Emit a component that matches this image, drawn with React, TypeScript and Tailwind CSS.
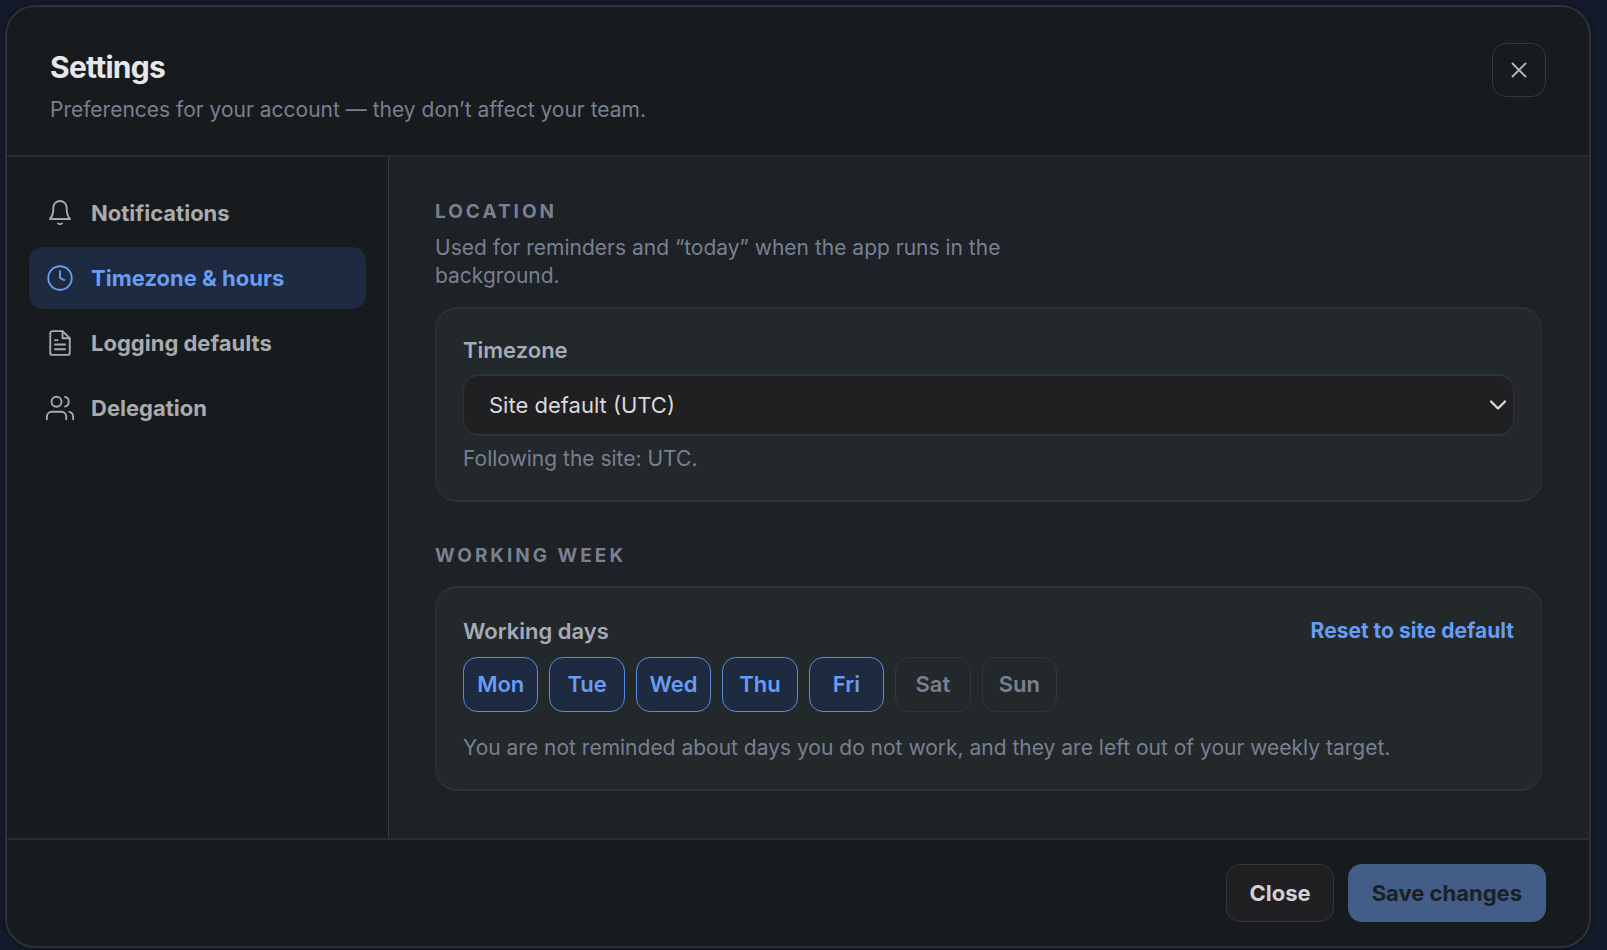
import { useState } from "react";
import type { ReactNode } from "react";
import { ChevronDown, X } from "lucide-react";

const icons: Record<string, ReactNode> = {
  bell: (
    <>
      <path d="M17.300 7.700A5.300 5.300 0 0 0 6.700 7.700c0 4.800-1 7.200-2.700 9.100h16c-1.700-1.900-2.700-4.300-2.700-9.100z" />
      <path d="M10.400 20.300c.9.800 2.300.8 3.200 0" />
    </>
  ),
  clock: (
    <>
      <circle cx="12" cy="12" r="9.400" />
      <path d="M12 6.600V12l3.400 1.700" />
    </>
  ),
  file: (
    <>
      <path d="M14 2.500H6a1.800 1.800 0 0 0-1.800 1.800v15.400A1.800 1.800 0 0 0 6 21.500h12a1.800 1.800 0 0 0 1.800-1.800V8.200z" />
      <path d="M14 2.500v5.700h5.800M8 9.700h2M8 13.200h8M8 17h8" />
    </>
  ),
  users: (
    <>
      <path d="M17 21v-2a4 4 0 0 0-4-4H5.500a4 4 0 0 0-4 4v2" />
      <circle cx="9.200" cy="7" r="4" />
      <path d="M22.500 21v-2a4 4 0 0 0-3-3.870M16 3.130a4 4 0 0 1 0 7.750" />
    </>
  ),
};

const sections = [
  { label: "Notifications", icon: "bell" },
  { label: "Timezone & hours", icon: "clock" },
  { label: "Logging defaults", icon: "file" },
  { label: "Delegation", icon: "users" },
];

const weekdays = ["Mon", "Tue", "Wed", "Thu", "Fri", "Sat", "Sun"];
const siteDefault = ["Mon", "Tue", "Wed", "Thu", "Fri"];

function SectionIcon({ name }: { name: string }) {
  return (
    <svg
      width="30"
      height="30"
      viewBox="0 0 24 24"
      fill="none"
      stroke="currentColor"
      strokeWidth="1.5"
      strokeLinecap="round"
      strokeLinejoin="round"
      className="shrink-0"
      aria-hidden="true"
    >
      {icons[name]}
    </svg>
  );
}

export default function App() {
  const [active, setActive] = useState("Timezone & hours");
  const [days, setDays] = useState<string[]>(siteDefault);

  const toggle = (day: string) =>
    setDays((current) => (current.includes(day) ? current.filter((d) => d !== day) : [...current, day]));

  return (
    <div className="flex min-h-screen bg-[#141b2d] pt-[5px] pr-4 pb-[2px] pl-[5px] font-['Inter','Liberation_Sans',sans-serif]">
      <section
        role="dialog"
        aria-labelledby="settings-title"
        className="flex min-w-0 flex-1 flex-col overflow-hidden rounded-[30px] border-2 border-[#2f3135] bg-[#171b1d] shadow-[0_0_6px_rgba(0,0,0,0.5)]"
      >
        <header className="flex items-start justify-between border-b-2 border-[#292b30] px-[43px] pt-9 pb-[27px]">
          <div>
            <h1 id="settings-title" className="text-[30px] leading-12 font-bold tracking-tight text-[#e6e7ea]">
              Settings
            </h1>
            <p className="text-[21px] leading-[37px] text-[#788091]">
              Preferences for your account — they don’t affect your team.
            </p>
          </div>
          <button
            type="button"
            aria-label="Close settings"
            className="flex size-[54px] items-center justify-center rounded-[14px] border border-[#36383c] text-[#b1b6c3]"
          >
            <X size={26} strokeWidth={1.7} aria-hidden="true" />
          </button>
        </header>

        <div className="flex flex-1">
          <nav aria-label="Settings sections" className="w-[382px] shrink-0 border-r border-[#36383c] px-[22px] pt-[25px]">
            <ul className="flex flex-col gap-[3px]">
              {sections.map(({ label, icon }) => (
                <li key={label}>
                  <button
                    type="button"
                    aria-current={active === label ? "page" : undefined}
                    onClick={() => setActive(label)}
                    className={
                      active === label
                        ? "flex h-[62px] w-full items-center gap-4 rounded-[14px] bg-[#1d2a40] px-4 text-left text-[22px] font-bold text-[#679df2]"
                        : "flex h-[62px] w-full items-center gap-4 rounded-[14px] px-4 text-left text-[22px] font-bold text-[#a9abae]"
                    }
                  >
                    <SectionIcon name={icon} />
                    {label}
                  </button>
                </li>
              ))}
            </ul>
          </nav>

          <main className="min-w-0 flex-1 bg-[#1e2125] pt-[41px] pr-[47px] pb-[46px] pl-[46px]">
            <h2 className="text-[19px] leading-7 font-bold tracking-[3px] text-[#788091]">LOCATION</h2>
            <p className="mt-2 max-w-[600px] text-[21px] leading-7 text-[#788091]">
              Used for reminders and “today” when the app runs in the background.
            </p>
            <div className="mt-[17px] rounded-[22px] border-x border-y-2 border-[#2f3236] bg-[#23282b] px-[27px] pt-[25px] pb-[25px]">
              <label htmlFor="timezone" className="block text-[22px] leading-8 font-semibold text-[#a6abb8]">
                Timezone
              </label>
              <div className="mt-2 grid items-center">
                <select
                  id="timezone"
                  className="col-start-1 row-start-1 h-[62px] w-full appearance-none rounded-[16px] border-x border-y-2 border-[#2f3236] bg-[#201f21] px-[25px] text-[22px] text-[#d8d9dc]"
                >
                  <option>Site default (UTC)</option>
                </select>
                <ChevronDown
                  size={28}
                  strokeWidth={2}
                  className="pointer-events-none col-start-1 row-start-1 mr-[2px] justify-self-end text-[#d8d9dc]"
                  aria-hidden="true"
                />
              </div>
              <p className="mt-[7px] text-[21px] leading-8 text-[#788091]">Following the site: UTC.</p>
            </div>

            <h2 className="mt-10 text-[19px] leading-7 font-bold tracking-[3px] text-[#788091]">WORKING WEEK</h2>
            <div className="mt-4 rounded-[22px] border-x border-y-2 border-[#2f3236] bg-[#23282b] px-[27px] pt-[27px] pb-[25px]">
              <div className="flex items-center justify-between">
                <h3 className="text-[22px] leading-8 font-semibold text-[#a6abb8]">Working days</h3>
                <button
                  type="button"
                  onClick={() => setDays(siteDefault)}
                  className="text-[21px] leading-8 font-bold text-[#679df2]"
                >
                  Reset to site default
                </button>
              </div>
              <div role="group" aria-label="Working days" className="mt-[10px] grid max-w-[594px] grid-cols-7 gap-[11px]">
                {weekdays.map((day) => (
                  <button
                    key={day}
                    type="button"
                    aria-pressed={days.includes(day)}
                    onClick={() => toggle(day)}
                    className={
                      days.includes(day)
                        ? "h-[55px] rounded-[14px] border border-[#5a8bdb] bg-[#1d2a40] text-[22px] font-semibold text-[#679df2]"
                        : "h-[55px] rounded-[14px] border border-[#323539] text-[22px] font-semibold text-[#788091]"
                    }
                  >
                    {day}
                  </button>
                ))}
              </div>
              <p className="mt-5 text-[21px] leading-8 text-[#788091]">
                You are not reminded about days you do not work, and they are left out of your weekly target.
              </p>
            </div>
          </main>
        </div>

        <footer className="flex items-center justify-end gap-[14px] border-t-2 border-[#292b30] px-[43px] py-6">
          <button
            type="button"
            className="h-[58px] rounded-[14px] border border-[#36383c] bg-[#201f21] px-[22px] text-[22px] font-bold text-[#d0d1d4]"
          >
            Close
          </button>
          <button
            type="button"
            className="h-[58px] rounded-[14px] bg-[#415d88] px-6 text-[22px] font-bold text-[#1b2025]"
          >
            Save changes
          </button>
        </footer>
      </section>
    </div>
  );
}
